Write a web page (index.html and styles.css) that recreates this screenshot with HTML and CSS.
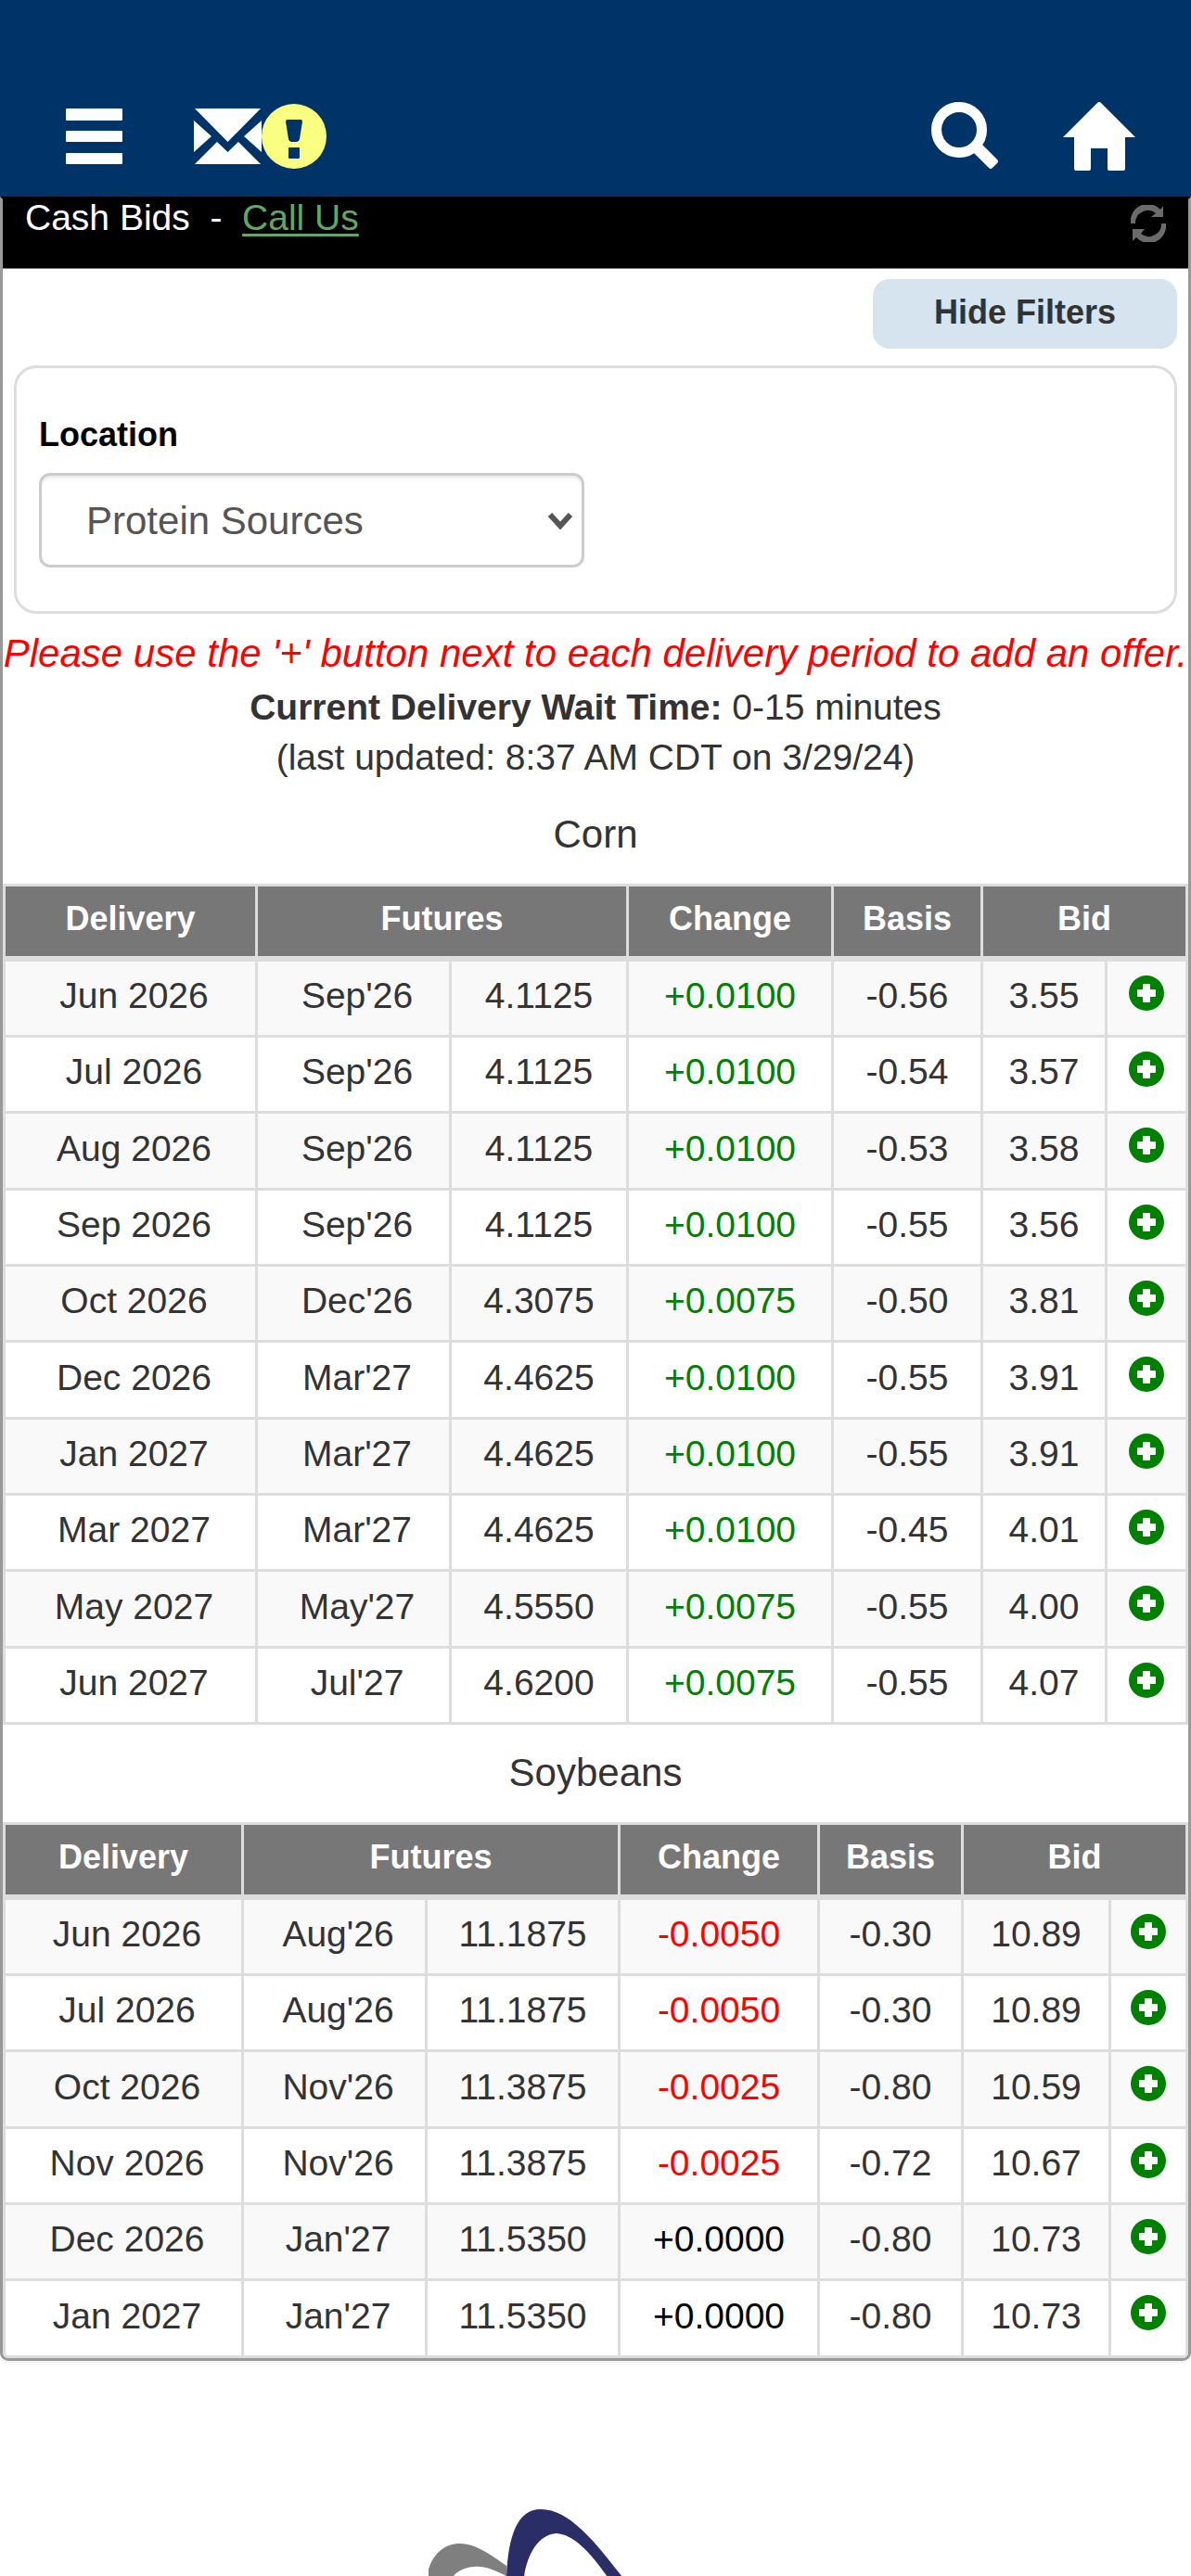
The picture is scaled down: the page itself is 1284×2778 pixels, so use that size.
FILE: index.html
```html
<!DOCTYPE html>
<html lang="en">
<head>
<meta charset="utf-8">
<title>Cash Bids</title>
<link rel="stylesheet" href="styles.css">
</head>
<body>
<svg class="sprite" aria-hidden="true">
  <symbol id="plus" viewBox="0 0 38 38"><path fill-rule="evenodd" d="M19 0a19 19 0 1 0 0 38a19 19 0 1 0 0-38zM16 9h6q1 0 1 1v5h5q1 0 1 1v6q0 1-1 1h-5v5q0 1-1 1h-6q-1 0-1-1v-5h-5q-1 0-1-1v-6q0-1 1-1h5v-5q0-1 1-1z"/></symbol>
</svg>

<header class="topbar">
  <nav class="group">
    <button class="icon-btn" type="button" aria-label="Menu">
      <svg width="62" height="62" viewBox="0 0 62 62"><rect x="0" y="1" width="61" height="13" rx="1"/><rect x="0" y="25" width="61" height="12" rx="1"/><rect x="0" y="49" width="61" height="12" rx="1"/></svg>
    </button>
    <a class="icon-btn mail" href="#messages" aria-label="Messages, new alert">
      <svg width="73" height="62" viewBox="0 0 73 62"><path d="M1 1H72L36.500 37zM0 14L19 31 0 48zM73 14L54 31 73 48zM1 61L25 37 36.500 48 48 37 72 61z"/></svg>
      <svg class="alert" width="70" height="70" viewBox="0 0 70 70"><path fill-rule="evenodd" d="M35 0a35 35 0 1 0 0 70a35 35 0 1 0 0-70zM28 17h14q2 0 2 2l-3 19q-1 3-3 3h-6q-2 0-3-3l-3-19q0-2 2-2zM30 47h10q1 0 1 1v10q0 1-1 1h-10q-1 0-1-1v-10q0-1 1-1z"/></svg>
    </a>
  </nav>
  <nav class="group group-end">
    <button class="icon-btn" type="button" aria-label="Search">
      <svg width="74" height="74" viewBox="0 0 74 74"><circle cx="30" cy="30" r="24.500" fill="none" stroke="#fff" stroke-width="11"/><path d="M46 55L55 46 71 62q2 2 0 4l-5 5q-2 2-4 0z"/></svg>
    </button>
    <a class="icon-btn" href="#home" aria-label="Home">
      <svg width="78" height="76" viewBox="0 0 78 76"><path d="M37 2q2-2 4 0L78 39H67V73q0 2-2 2H50q-2 0-2-2V51H30V73q0 2-2 2H14q-2 0-2-2V39H0z"/></svg>
    </a>
  </nav>
</header>

<main class="panel">
  <div class="titlebar">
    <p class="title">Cash Bids&nbsp; -&nbsp; <a href="#call">Call Us</a></p>
    <button class="icon-btn refresh" type="button" aria-label="Refresh">
      <svg width="38" height="40" viewBox="0 0 38 40"><path d="M0 20A18.500 18.500 0 0 1 32 5L35 1V13H22L27 9A13.500 13.500 0 0 0 5 20zM38 20A18.500 18.500 0 0 1 6 35L2 39V26H15L11 31A13.500 13.500 0 0 0 33 20z"/></svg>
    </button>
  </div>

  <div class="tools"><button class="filter-btn" type="button">Hide Filters</button></div>

  <form class="filters">
    <label class="filter-label" for="location">Location</label>
    <div class="select-wrap">
      <select class="select" id="location"><option>Protein Sources</option></select>
      <svg class="chevron" width="28" height="18" viewBox="0 0 28 18"><path d="M3 2L14 14 25 2" fill="none" stroke="#555" stroke-width="6"/></svg>
    </div>
  </form>

  <p class="notice">Please use the '+' button next to each delivery period to add an offer.</p>
  <p class="wait"><strong>Current Delivery Wait Time:</strong> 0-15 minutes<br>(last updated: 8:37 AM CDT on 3/29/24)</p>

  <table class="bids corn">
    <caption>Corn</caption>
    <colgroup><col class="delivery"><col class="month"><col class="price"><col class="change"><col class="basis"><col class="bid"><col class="add"></colgroup>
    <thead><tr><th>Delivery</th><th colspan="2">Futures</th><th>Change</th><th>Basis</th><th colspan="2">Bid</th></tr></thead>
    <tbody></tbody>
  </table>

  <table class="bids soybeans">
    <caption>Soybeans</caption>
    <colgroup><col class="delivery"><col class="month"><col class="price"><col class="change"><col class="basis"><col class="bid"><col class="add"></colgroup>
    <thead><tr><th>Delivery</th><th colspan="2">Futures</th><th>Change</th><th>Basis</th><th colspan="2">Bid</th></tr></thead>
    <tbody></tbody>
  </table>
</main>

<footer class="footer">
  <svg class="logo" width="360" height="72" viewBox="0 0 360 72" role="img" aria-label="Company logo">
    <path fill="#7f7f7f" d="M-2 73C2 50 16 37 34 37C50 37 66 48 84 61V72C70 65 60 61 49 62C38 63 31 67 26 73z"/>
    <path fill="#2b2d66" d="M84 73C86 28 96 0 121 0C152 0 180 36 209 73H193C174 46 156 27 138 26C118 27 106 50 103 73z"/>
  </svg>
</footer>
<script src="bids.js"></script>
</body>
</html>
```
FILE: styles.css
```css
* { box-sizing: border-box; }
body {
  margin: 0;
  background: #fff;
  color: #333;
  font: 39px/54px "Liberation Sans", Arial, sans-serif;
}
p { margin: 0; }
.sprite { display: none; }

.topbar {
  display: flex;
  justify-content: space-between;
  align-items: center;
  height: 212px;
  padding: 81px 60px 0 71px;
  background: #003469;
}
.group { display: flex; align-items: center; gap: 76px; }
.group-end { gap: 68px; }
.icon-btn {
  display: flex;
  align-items: center;
  padding: 0;
  border: 0;
  background: none;
  fill: #fff;
}
.alert { fill: #faff81; }

.panel {
  border: 3px solid #999;
  border-top-color: #000;
  border-radius: 0 0 9px 9px;
  box-shadow: 0 3px 3px rgba(0, 0, 0, .05);
  overflow: hidden;
}
.titlebar {
  display: flex;
  justify-content: space-between;
  align-items: flex-start;
  height: 75px;
  padding: 0 24px;
  border-bottom: 1px solid #777;
  background: #000;
  color: #fff;
  line-height: 39px;
}
.titlebar a { color: #60a863; text-decoration-thickness: 3px; text-underline-offset: 4px; }
.refresh { margin-top: 6px; fill: #6b6b6b; }

.tools { display: flex; justify-content: flex-end; padding: 11px 12px 18px; }
.filter-btn {
  width: 328px;
  height: 75px;
  padding: 0 0 4px;
  border: 0;
  border-radius: 18px;
  background: #d6e4f0;
  color: #333;
  font: bold 36px/54px "Liberation Sans", Arial, sans-serif;
}
.filters {
  margin: 0 12px 16px;
  padding: 45px 24px 47px;
  border: 3px solid #ddd;
  border-radius: 24px;
}
.filter-label { display: block; margin-bottom: 14px; color: #000; font-weight: bold; font-size: 36px; }
.select-wrap { position: relative; width: 49%; }
.select {
  display: block;
  width: 100%;
  height: 102px;
  padding: 2px 48px 0;
  border: 3px solid #ccc;
  border-radius: 12px;
  box-shadow: inset 0 3px 3px rgba(0, 0, 0, .075);
  background: #fff;
  color: #555;
  font: 42px/54px "Liberation Sans", Arial, sans-serif;
  appearance: none;
}
.chevron { position: absolute; right: 12px; top: 43px; pointer-events: none; }

.notice { color: #f00; font-size: 42px; font-style: italic; text-align: center; white-space: nowrap; }
.wait { padding: 4px 0; text-align: center; }

.bids { width: 100%; border-collapse: collapse; table-layout: fixed; text-align: center; }
.bids caption { padding: 25px 0 26px; font-size: 42px; }
.bids th, .bids td { border: 3px solid #ddd; }
.bids th {
  padding: 8px 0 13px;
  border-bottom-width: 6px;
  background: #777;
  color: #fff;
  font-size: 36px;
}
.bids td { padding: 10px 0 15px; }
.bids td:nth-child(-n+2) { padding-left: 8px; }
.bids tbody tr:nth-child(odd) { background: #f9f9f9; }
.bids tbody tr:nth-child(3n) { height: 83px; }
.bids .up { color: #008000; }
.bids .down { color: #f00; }
.bids .flat { color: #000; }
.bids .action { padding: 15px 0; vertical-align: top; }
.action .icon-btn { margin: 0 auto; fill: #008000; }

.corn .delivery { width: 272px; }
.corn .month { width: 209px; }
.corn .price { width: 191px; }
.corn .change { width: 221px; }
.corn .basis { width: 161px; }
.corn .bid { width: 134px; }
.corn .add { width: 87px; }
.soybeans .delivery { width: 257px; }
.soybeans .month { width: 198px; }
.soybeans .price { width: 208px; }
.soybeans .change { width: 215px; }
.soybeans .basis { width: 155px; }
.soybeans .bid { width: 159px; }
.soybeans .add { width: 83px; }

.footer { display: flex; justify-content: center; padding-top: 160px; }
.logo { display: block; }
```
FILE: bids.js
```js
const bids = {
  corn: [
    ["Jun 2026", "Sep'26", "4.1125", "+0.0100", "-0.56", "3.55"],
    ["Jul 2026", "Sep'26", "4.1125", "+0.0100", "-0.54", "3.57"],
    ["Aug 2026", "Sep'26", "4.1125", "+0.0100", "-0.53", "3.58"],
    ["Sep 2026", "Sep'26", "4.1125", "+0.0100", "-0.55", "3.56"],
    ["Oct 2026", "Dec'26", "4.3075", "+0.0075", "-0.50", "3.81"],
    ["Dec 2026", "Mar'27", "4.4625", "+0.0100", "-0.55", "3.91"],
    ["Jan 2027", "Mar'27", "4.4625", "+0.0100", "-0.55", "3.91"],
    ["Mar 2027", "Mar'27", "4.4625", "+0.0100", "-0.45", "4.01"],
    ["May 2027", "May'27", "4.5550", "+0.0075", "-0.55", "4.00"],
    ["Jun 2027", "Jul'27", "4.6200", "+0.0075", "-0.55", "4.07"]
  ],
  soybeans: [
    ["Jun 2026", "Aug'26", "11.1875", "-0.0050", "-0.30", "10.89"],
    ["Jul 2026", "Aug'26", "11.1875", "-0.0050", "-0.30", "10.89"],
    ["Oct 2026", "Nov'26", "11.3875", "-0.0025", "-0.80", "10.59"],
    ["Nov 2026", "Nov'26", "11.3875", "-0.0025", "-0.72", "10.67"],
    ["Dec 2026", "Jan'27", "11.5350", "+0.0000", "-0.80", "10.73"],
    ["Jan 2027", "Jan'27", "11.5350", "+0.0000", "-0.80", "10.73"]
  ]
};

for (const [crop, rows] of Object.entries(bids)) {
  const body = document.querySelector(`.${crop} tbody`);
  for (const values of rows) {
    const row = body.insertRow();
    values.forEach((value, i) => {
      const cell = row.insertCell();
      cell.textContent = value;
      if (i === 3) {
        const change = Number(value);
        cell.className = change > 0 ? "up" : change < 0 ? "down" : "flat";
      }
    });
    const action = row.insertCell();
    action.className = "action";
    action.innerHTML = `<button class="icon-btn" type="button" aria-label="Add offer for ${values[0]}"><svg width="38" height="38"><use href="#plus"/></svg></button>`;
  }
}
```
